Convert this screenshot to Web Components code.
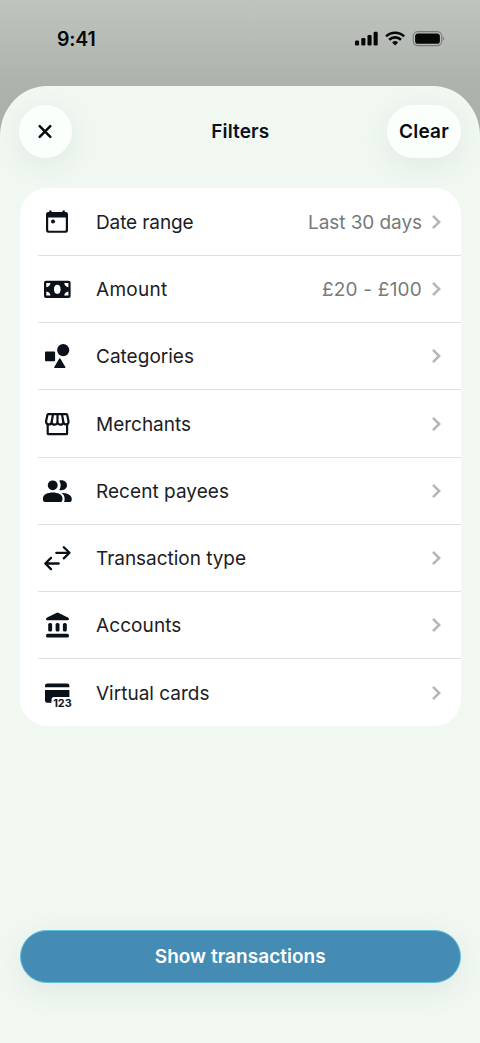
<!DOCTYPE html>
<html lang="en">
<head>
<meta charset="utf-8">
<title>Filters</title>
<style>
html,body{margin:0;height:100%;overflow:hidden}
body{font-family:Inter,"Liberation Sans",sans-serif;color:#0b1118;background:#aeb3ad}
</style>
</head>
<body>
<filters-screen></filters-screen>
<script>
const define = (name, html, setup) => {
  const t = document.createElement('template');
  t.innerHTML = html;
  customElements.define(name, class extends HTMLElement {
    connectedCallback() {
      if (this.shadowRoot) return;
      this.attachShadow({mode: 'open'}).append(t.content.cloneNode(true));
      if (setup) setup(this, this.shadowRoot);
    }
  });
};

// Label whose tracking is adjusted so that it takes up the width in its "w" attribute.
define('fit-label', `<style>:host{display:inline-block;white-space:nowrap}span{display:inline-block}</style><span><slot></slot></span>`,
  (host, root) => {
    const s = root.querySelector('span');
    const n = host.textContent.length;
    const ls = (parseFloat(host.getAttribute('w')) - s.getBoundingClientRect().width) / n;
    s.style.letterSpacing = ls.toFixed(3) + 'px';
  });

define('status-bar', `<style>
:host{display:flex;justify-content:space-between;align-items:center;height:78px;padding:0 36px 0 57px;box-sizing:border-box;color:#060807}
fit-label{font-size:19.5px;font-weight:600;line-height:24px}
.r{display:flex;align-items:center}
svg{display:block}
</style>
<fit-label w="38.500">9:41</fit-label>
<div class="r"><svg width="90" height="18" viewBox="0 0 90 18" fill="currentColor">
<rect x="1" y="10.5" width="4.1" height="5" rx="1.2"/><rect x="7.3" y="8" width="4.1" height="7.5" rx="1.2"/><rect x="13.5" y="5" width="4.1" height="10.5" rx="1.2"/><rect x="19.6" y="1.8" width="4.1" height="13.7" rx="1.2"/>
<g fill="none" stroke="currentColor" stroke-width="2.6"><path d="M32.100 6.400a12.900 12.900 0 0 1 18 0"/><path d="M35.200 9.800a8.400 8.400 0 0 1 11.800 0"/></g>
<path d="M41.1 15.6l-3-3.1a4.3 4.3 0 0 1 6 0z"/>
<rect x="59.2" y="1.6" width="28.6" height="14" rx="4.6" fill="none" stroke="#777c77" stroke-width="1.1"/><rect x="61.1" y="3.5" width="24.8" height="10.3" rx="2.9"/><path d="M89 6.7v3.8c1.6-.6 1.6-3.200 0-3.800z" fill="#777c77"/>
</svg></div>`);

define('pill-button', `<style>
:host{display:flex;align-items:center;justify-content:center;box-sizing:border-box;height:53px;border-radius:27px;background:#fbfffc;color:#070b0e;font-size:19px;font-weight:600;line-height:24px;box-shadow:0 7px 30px rgba(40,50,45,.08)}
:host([primary]){background:#448cb3;border:1.5px solid #62bfdc;color:#fff;box-shadow:0 8px 30px rgba(40,50,45,.08)}
</style><slot></slot>`);

const icons = {
  date: '<path fill-rule="evenodd" d="M7.200 6h1V4.600h2.300V6h11V4.600h2.300V6h1a2.200 2.200 0 0 1 2.200 2.200v16.400a2.200 2.200 0 0 1-2.200 2.200H7.200A2.200 2.200 0 0 1 5 24.600V8.200A2.200 2.200 0 0 1 7.200 6zM7.200 11.500v12.400q0 .8.8.8h16q.8 0 .8-.8V11.500z"/><circle cx="12" cy="15.500" r="2"/>',
  amount: '<rect x="3" y="7.700" width="26.600" height="17.200" rx="2"/><g fill="#fff"><ellipse cx="16.300" cy="16.300" rx="3.300" ry="4.600"/><path d="M5.300 10h4.200q-.4 3.600-4.200 4.200zM27.400 10h-4.200q.4 3.600 4.200 4.200zM5.300 22.600h4.200q-.4-3.600-4.200-4.200zM27.400 22.600h-4.200q.4-3.600 4.200-4.200z"/></g>',
  categories: '<rect x="4" y="11.500" width="10.100" height="9.700" rx="1"/><circle cx="22.200" cy="10.100" r="6.100"/><path d="M18.800 18.900l5 8.500H13.800z" stroke="currentColor" stroke-width="1.200" stroke-linejoin="round"/>',
  merchants: '<g fill="none" stroke="currentColor" stroke-width="2.200" stroke-linejoin="round"><path d="M7.200 6.200h18.200q.6 0 .8.700l1.300 6c.4 4.400-4.200 4.500-5.100 1.500-.7 3-5.300 3-5.900 0-.6 3-5.200 3-5.900 0-.9 3-5.900 2.900-5.500-1.500L6.400 6.900q.2-.7.8-.7z"/><path d="M12 6.200l-1.400 8M16.500 6.200v8M21 6.200l1.400 8M6.700 16v9.400q0 .8.800.8h17.800q.8 0 .8-.8V16" /></g>',
  payees: '<circle cx="11.700" cy="10.300" r="4.900"/><path d="M2 25v-2c0-3.400 4.500-5.500 9.700-5.500s9.700 2.100 9.700 5.500v2q0 1.900-1.900 1.900H3.900Q2 26.900 2 25z"/><path d="M18.200 5.700c4.200-1.300 7.800 1.100 7.800 4.600s-3.600 5.900-7.800 4.600c2-2.600 2-6.600 0-9.200zM20.400 17.700c5.700.3 10.300 2.400 10.300 5.700V25q0 1.900-1.900 1.900h-5.900q.7-.8.7-2v-1.500c0-2.400-1.100-4.300-3.200-5.700z"/>',
  type: '<g fill="none" stroke="currentColor" stroke-width="2.300" stroke-linecap="round" stroke-linejoin="round"><path d="M15.300 10.800h13M22.800 5.200l5.700 5.600-5.700 5.600M17.700 21.500h-13M10 15.900l-5.700 5.600L10 27.100"/></g>',
  accounts: '<path d="M15.300 3.900q1.200-.6 2.400 0l9.200 4.500q1.100.6 1.100 1.500 0 1.300-1.300 1.300H6.300Q5 11.200 5 9.900q0-.9 1.100-1.500z"/><rect x="7.200" y="13.900" width="3.900" height="8.600" rx="1.600"/><rect x="14.600" y="13.900" width="3.900" height="8.600" rx="1.600"/><rect x="21.900" y="13.900" width="3.900" height="8.600" rx="1.600"/><rect x="5" y="24.800" width="23" height="3.800" rx="1.700"/>',
  cards: '<path d="M4 10.300V8.700Q4 6.500 6.200 6.500h20q2.200 0 2.200 2.200v1.600zM4 12.900h24.400v7H13q-2.500 0-2.500 2.500v3.400H6.200Q4 25.800 4 23.600z"/><text x="12.200" y="29.800" font-size="10" font-weight="700" textLength="18.500" lengthAdjust="spacingAndGlyphs">123</text>'
};

define('filter-row', `<style>
:host{display:flex;align-items:center;height:67.25px;padding:0 16px 0 21.500px;position:relative;box-sizing:border-box}
:host(:not(:last-child))::after{content:"";position:absolute;left:18.500px;right:0;bottom:-.5px;height:1px;background:#dedfdf}
svg{display:block;flex:none;overflow:visible}
.name,.value{font-size:19px;font-weight:400;line-height:26px;padding-top:2px}
.name{flex:1;padding-left:23px;color:#1b2024}
.value{color:#767a79}
.chev{margin-left:7px}
</style>
<svg class="ic" width="32" height="32" viewBox="0 0 32 32" fill="currentColor"></svg>
<div class="name"><slot></slot></div><div class="value"><slot name="value"></slot></div>
<svg class="chev" width="16" height="18" viewBox="0 0 16 18" fill="none" stroke="#b4b7b6" stroke-width="2.500"><path d="M4 2.800L10.200 9 4 15.200"/></svg>`,
  (host, root) => { root.querySelector('.ic').innerHTML = icons[host.getAttribute('icon')]; });

define('filter-list', `<style>:host{display:block;background:#fff;border-radius:27px;overflow:hidden}</style><slot></slot>`);

define('filters-screen', `<style>
:host{display:flex;flex-direction:column;height:1043px;background:linear-gradient(#bfc4be,#adb2ac 86px,#a9aea9 140px)}
status-bar{margin-bottom:8px}
.sheet{flex:1;display:flex;flex-direction:column;padding:19px 19px 0 19.500px;background:#f1f8f2;border-radius:47px 47px 0 0 / 50px 50px 0 0}
header{display:grid;grid-template-columns:1fr auto 1fr;align-items:center;margin-bottom:30.200px}
h1{margin:0;font-size:19px;font-weight:600;line-height:24px}
.close{width:53px;margin-left:-1px}.clear{width:74px;justify-self:end}
.foot{margin-top:auto;padding-bottom:60px}
</style>
<status-bar></status-bar>
<div class="sheet">
<header><pill-button class="close"><svg width="16" height="16" viewBox="0 0 16 16" fill="none" stroke="currentColor" stroke-width="2.500" stroke-linecap="round"><path d="M2.700 2.200l10.600 10.600M13.300 2.200L2.700 12.800"/></svg></pill-button>
<h1><fit-label w="58">Filters</fit-label></h1>
<pill-button class="clear"><fit-label w="50">Clear</fit-label></pill-button></header>
<filter-list>
<filter-row icon="date"><fit-label w="97.500">Date range</fit-label><fit-label slot="value" w="114">Last 30 days</fit-label></filter-row>
<filter-row icon="amount"><fit-label w="71.500">Amount</fit-label><fit-label slot="value" w="100">£20 - £100</fit-label></filter-row>
<filter-row icon="categories"><fit-label w="98">Categories</fit-label></filter-row>
<filter-row icon="merchants"><fit-label w="95">Merchants</fit-label></filter-row>
<filter-row icon="payees"><fit-label w="133">Recent payees</fit-label></filter-row>
<filter-row icon="type"><fit-label w="150">Transaction type</fit-label></filter-row>
<filter-row icon="accounts"><fit-label w="85.500">Accounts</fit-label></filter-row>
<filter-row icon="cards"><fit-label w="113.500">Virtual cards</fit-label></filter-row>
</filter-list>
<div class="foot"><pill-button primary><fit-label w="171">Show transactions</fit-label></pill-button></div>
</div>`);
</script>
</body>
</html>
